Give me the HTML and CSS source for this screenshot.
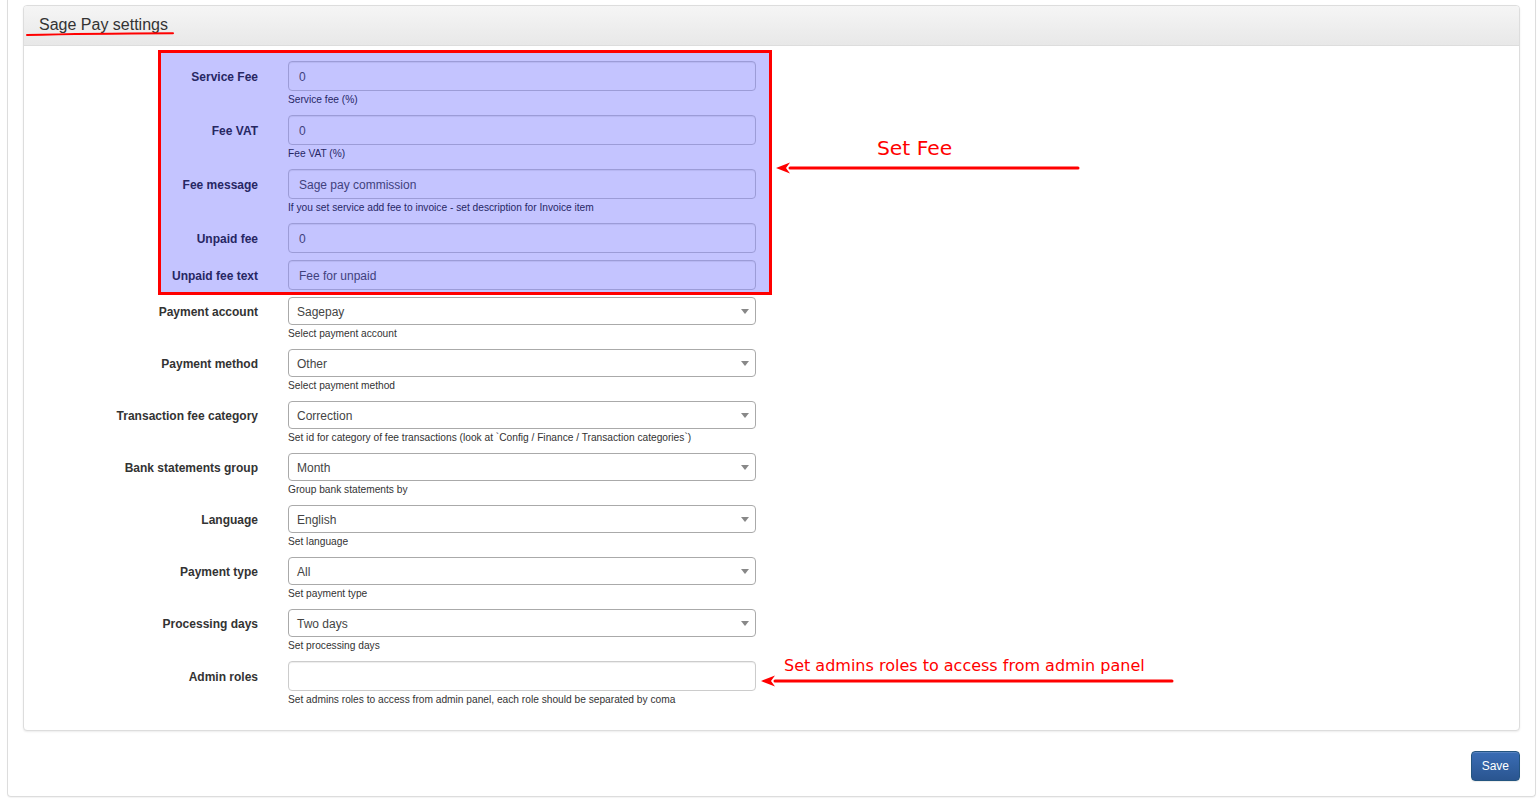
FILE: index.html
```html
<!DOCTYPE html>
<html>
<head>
<meta charset="utf-8">
<title>Sage Pay settings</title>
<link rel="stylesheet" href="styles.css">
</head>
<body>
<div class="page">
  <div class="outer">
    <div class="panel">
      <div class="panel-heading"><span class="panel-title">Sage Pay settings</span></div>
      <div class="panel-body">
        <div class="group">
          <div class="label">Service Fee</div>
          <div class="input">0</div>
          <div class="help">Service fee (%)</div>
        </div>
        <div class="group">
          <div class="label">Fee VAT</div>
          <div class="input">0</div>
          <div class="help">Fee VAT (%)</div>
        </div>
        <div class="group">
          <div class="label">Fee message</div>
          <div class="input">Sage pay commission</div>
          <div class="help">If you set service add fee to invoice - set description for Invoice item</div>
        </div>
        <div class="group">
          <div class="label">Unpaid fee</div>
          <div class="input">0</div>
        </div>
        <div class="group">
          <div class="label">Unpaid fee text</div>
          <div class="input">Fee for unpaid</div>
        </div>
        <div class="group">
          <div class="label">Payment account</div>
          <div class="select">Sagepay<span class="arrow"></span></div>
          <div class="help">Select payment account</div>
        </div>
        <div class="group">
          <div class="label">Payment method</div>
          <div class="select">Other<span class="arrow"></span></div>
          <div class="help">Select payment method</div>
        </div>
        <div class="group">
          <div class="label">Transaction fee category</div>
          <div class="select">Correction<span class="arrow"></span></div>
          <div class="help">Set id for category of fee transactions (look at `Config / Finance / Transaction categories`)</div>
        </div>
        <div class="group">
          <div class="label">Bank statements group</div>
          <div class="select">Month<span class="arrow"></span></div>
          <div class="help">Group bank statements by</div>
        </div>
        <div class="group">
          <div class="label">Language</div>
          <div class="select">English<span class="arrow"></span></div>
          <div class="help">Set language</div>
        </div>
        <div class="group">
          <div class="label">Payment type</div>
          <div class="select">All<span class="arrow"></span></div>
          <div class="help">Set payment type</div>
        </div>
        <div class="group">
          <div class="label">Processing days</div>
          <div class="select">Two days<span class="arrow"></span></div>
          <div class="help">Set processing days</div>
        </div>
        <div class="group">
          <div class="label">Admin roles</div>
          <div class="input"></div>
          <div class="help">Set admins roles to access from admin panel, each role should be separated by coma</div>
        </div>
      </div>
    </div>
    <div class="actions"><button class="btn-save">Save</button></div>
  </div>

  <div class="highlight"></div>
  <svg class="underline" width="160" height="10" viewBox="0 0 160 10"><path d="M1 6 Q 60 4.5 147 4.2" stroke="#f00" stroke-width="2" fill="none" stroke-linecap="round"/></svg>
  <div class="note note-fee">Set Fee</div>
  <svg class="arrow-fee" width="310" height="14" viewBox="0 0 310 14"><path d="M14 7 H302" stroke="#f00" stroke-width="3" stroke-linecap="round"/><path d="M0 7 L14 1.5 L10 7 L14 12.5 Z" fill="#f00"/></svg>
  <div class="note note-admin">Set admins roles to access from admin panel</div>
  <svg class="arrow-admin" width="418" height="14" viewBox="0 0 418 14"><path d="M14 7 H411" stroke="#f00" stroke-width="3" stroke-linecap="round"/><path d="M0 7 L14 1.5 L10 7 L14 12.5 Z" fill="#f00"/></svg>
</div>
</body>
</html>
```

FILE: styles.css
```css
html, body {
  margin: 0;
  padding: 0;
  background: #fff;
  overflow: hidden;
}
body {
  font-family: "Liberation Sans", Arial, sans-serif;
  color: #333;
}
.page {
  position: relative;
  width: 1539px;
  height: 801px;
}
.outer {
  margin-left: 7px;
  width: 1529px;
  box-sizing: border-box;
  border: 1px solid #ddd;
  border-top: 0;
  border-radius: 0 0 4px 4px;
  padding: 5px 15px 15px 15px;
  box-shadow: 0 1px 1px rgba(0,0,0,0.05);
}
.panel {
  border: 1px solid #ddd;
  border-radius: 4px;
  box-shadow: 0 1px 2px rgba(0,0,0,0.08);
  background: #fff;
}
.panel-heading {
  height: 40px;
  box-sizing: border-box;
  padding: 0 15px;
  display: flex;
  align-items: center;
  background: linear-gradient(to bottom, #f5f5f5 0%, #e8e8e8 100%);
  border-bottom: 1px solid #ddd;
  border-radius: 3px 3px 0 0;
}
.panel-title {
  font-size: 16px;
  color: #333;
  margin-top: -2px;
}
.panel-body {
  padding: 15px 15px 15px 0;
}
.group {
  display: grid;
  grid-template-columns: 234px 468px;
  column-gap: 30px;
  margin-bottom: 7px;
}
.label {
  grid-column: 1;
  grid-row: 1;
  align-self: center;
  text-align: right;
  font-weight: bold;
  font-size: 12px;
  padding-top: 2px;
  color: #333;
}
.input {
  grid-column: 2;
  grid-row: 1;
  height: 30px;
  box-sizing: border-box;
  border: 1px solid #ccc;
  border-radius: 4px;
  padding: 1px 10px 0 10px;
  font-size: 12px;
  line-height: 28px;
  color: #555;
  box-shadow: inset 0 1px 1px rgba(0,0,0,0.075);
}
.select {
  grid-column: 2;
  grid-row: 1;
  position: relative;
  height: 28px;
  box-sizing: border-box;
  border: 1px solid #aaa;
  border-radius: 4px;
  padding: 2px 8px 0 8px;
  font-size: 12px;
  line-height: 25px;
  color: #444;
}
.arrow {
  position: absolute;
  right: 6px;
  top: 11px;
  width: 0;
  height: 0;
  border-style: solid;
  border-width: 5px 4px 0 4px;
  border-color: #888 transparent transparent transparent;
}
.help {
  grid-column: 2;
  grid-row: 2;
  font-size: 10.2px;
  line-height: 17px;
  color: #333;
}
.actions {
  display: flex;
  justify-content: flex-end;
  margin-top: 20px;
}
.btn-save {
  font-family: "Liberation Sans", Arial, sans-serif;
  font-size: 12px;
  line-height: 18px;
  padding: 5px 10px;
  color: #fff;
  border: 1px solid #245580;
  border-radius: 4px;
  background: linear-gradient(to bottom, #3a6db5 0%, #2a5590 100%);
  box-shadow: inset 0 1px 0 rgba(255,255,255,0.15), 0 1px 1px rgba(0,0,0,0.075);
}
.highlight {
  position: absolute;
  left: 158px;
  top: 50px;
  width: 614px;
  height: 245px;
  box-sizing: border-box;
  border: 3px solid #f00;
  background: rgba(0, 0, 255, 0.23);
}
.underline {
  position: absolute;
  left: 26px;
  top: 29px;
}
.note {
  position: absolute;
  font-family: "DejaVu Sans", sans-serif;
  color: #f00;
  white-space: nowrap;
}
.note-fee {
  left: 877px;
  top: 135px;
  font-size: 20.3px;
  line-height: 26px;
}
.note-admin {
  left: 784px;
  top: 656px;
  font-size: 16px;
  line-height: 20px;
}
.arrow-fee {
  position: absolute;
  left: 776px;
  top: 161px;
}
.arrow-admin {
  position: absolute;
  left: 761px;
  top: 674px;
}
```
